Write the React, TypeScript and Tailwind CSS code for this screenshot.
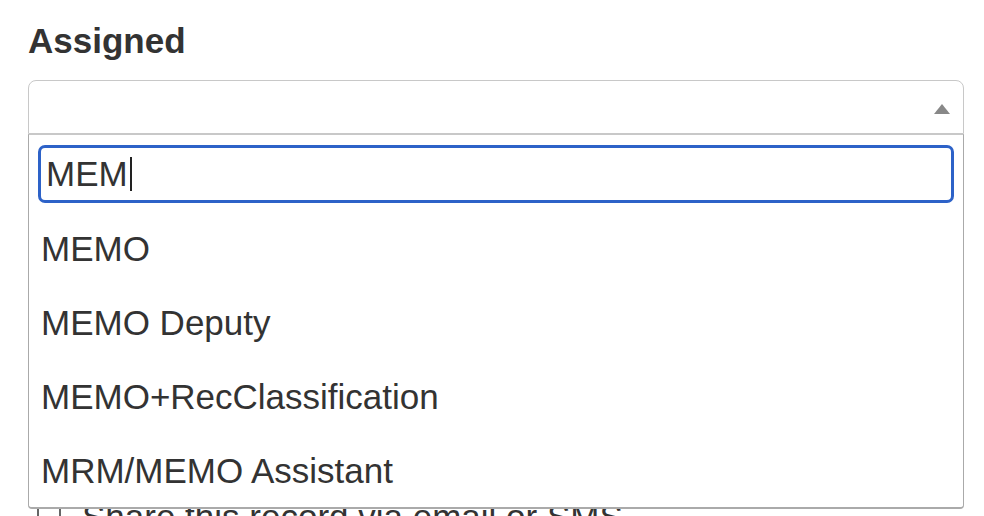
export default function App() {
  const options = ["MEMO", "MEMO Deputy", "MEMO+RecClassification", "MRM/MEMO Assistant"];

  return (
    <div className="h-[516px] w-[984px] overflow-hidden bg-white pl-[28px] pr-[20px] font-['Liberation_Sans',Arial,sans-serif] text-[#333]">
      <h2 className="pt-[21px] text-[35px] font-bold leading-[40px] text-[#333]">Assigned</h2>

      <div className="relative mt-[19px] w-[936px]">
        {/* selection box */}
        <div className="flex h-[54px] items-center justify-end rounded-t-[8px] border border-[#c8c8c8] bg-white pr-[13px] pt-1">
          <svg width="16" height="10" viewBox="0 0 16 10">
            <polygon points="8,0 16,10 0,10" fill="#888" />
          </svg>
        </div>

        {/* open dropdown */}
        <div className="absolute left-0 right-0 top-full z-10 rounded-b-[4px] border-x border-b-2 border-t border-x-[#aaa] border-b-[#aaa] border-t-[#c8c8c8] bg-white px-[9px] pt-[10px]">
          <div className="flex h-[58px] items-center rounded-[7px] border-[3px] border-[#2d62c8] pl-[5px]">
            <span className="text-[35px] leading-[40px] text-[#333]">MEM</span>
            <span className="ml-[2px] h-[34px] w-[2px] bg-[#222]" />
          </div>
          <ul className="-mx-[9px] mt-[8px]">
            {options.map((o) => (
              <li key={o} className="flex h-[74px] items-center px-3 pt-[2px] text-[35px] leading-[40px] text-[#333]">
                {o}
              </li>
            ))}
          </ul>
        </div>
      </div>

      {/* field hidden under the dropdown */}
      <div className="mt-[362px] flex items-start pl-[9px]">
        <span className="mt-[4px] h-[26px] w-[24px] border-2 border-[#666] bg-white" />
        <span className="ml-[21px] text-[35px] leading-[41px] text-[#333]">Share this record via email or SMS</span>
      </div>
    </div>
  );
}
